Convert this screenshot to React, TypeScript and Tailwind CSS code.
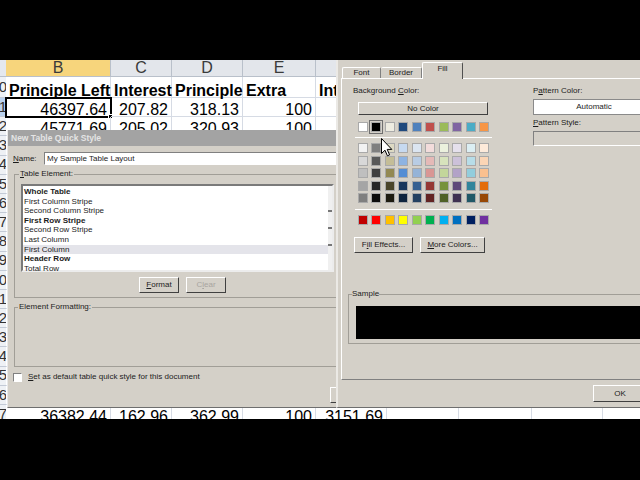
import React from "react";

const colW = ["w-[6px]", "w-[105px]", "w-[61px]", "w-[71px]", "w-[73px]", "w-[71px]", "w-[72px]", "w-[73px]", "w-[71px]", "w-[71px]"];
const letters = ["", "B", "C", "D", "E", "F", "G", "H", "I", "J"];

const rowData: Record<number, { vals: string[]; bold?: boolean }> = {
  10: { vals: ["Principle Left", "Interest", "Principle", "Extra", "Interest Paid"], bold: true },
  11: { vals: ["46397.64", "207.82", "318.13", "100", ""] },
  12: { vals: ["45771.69", "205.02", "320.93", "100", ""] },
  27: { vals: ["36382.44", "162.96", "362.99", "100", "3151.69"] },
};

const raised = "border border-t-white border-l-white border-r-[#404040] border-b-[#404040] bg-[#d4d0c8]";
const sunken = "border border-t-[#808080] border-l-[#808080] border-r-white border-b-white";

// office 2007 theme palette
const themeTop = ["bg-[#ffffff]", "bg-[#000000]", "bg-[#eeece1]", "bg-[#1f497d]", "bg-[#4f81bd]", "bg-[#c0504d]", "bg-[#9bbb59]", "bg-[#8064a2]", "bg-[#4bacc6]", "bg-[#f79646]"];
const themeShades = [
  ["bg-[#f2f2f2]", "bg-[#7f7f7f]", "bg-[#ddd9c3]", "bg-[#c6d9f0]", "bg-[#dbe5f1]", "bg-[#f2dcdb]", "bg-[#ebf1dd]", "bg-[#e5e0ec]", "bg-[#dbeef3]", "bg-[#fdeada]"],
  ["bg-[#d8d8d8]", "bg-[#595959]", "bg-[#c4bd97]", "bg-[#8db3e2]", "bg-[#b8cce4]", "bg-[#e5b9b7]", "bg-[#d7e3bc]", "bg-[#ccc1d9]", "bg-[#b7dde8]", "bg-[#fbd5b5]"],
  ["bg-[#bfbfbf]", "bg-[#3f3f3f]", "bg-[#938953]", "bg-[#548dd4]", "bg-[#95b3d7]", "bg-[#d99694]", "bg-[#c3d69b]", "bg-[#b2a2c7]", "bg-[#92cddc]", "bg-[#fac08f]"],
  ["bg-[#a5a5a5]", "bg-[#262626]", "bg-[#494429]", "bg-[#17365d]", "bg-[#366092]", "bg-[#953734]", "bg-[#76923c]", "bg-[#5f497a]", "bg-[#31859b]", "bg-[#e36c09]"],
  ["bg-[#7f7f7f]", "bg-[#0c0c0c]", "bg-[#1d1b10]", "bg-[#0f243e]", "bg-[#244061]", "bg-[#632423]", "bg-[#4f6128]", "bg-[#3f3151]", "bg-[#205867]", "bg-[#974806]"],
];
const standard = ["bg-[#c00000]", "bg-[#ff0000]", "bg-[#ffc000]", "bg-[#ffff00]", "bg-[#92d050]", "bg-[#00b050]", "bg-[#00b0f0]", "bg-[#0070c0]", "bg-[#002060]", "bg-[#7030a0]"];

const elements = [
  { t: "Whole Table", b: true },
  { t: "First Column Stripe" },
  { t: "Second Column Stripe" },
  { t: "First Row Stripe", b: true },
  { t: "Second Row Stripe" },
  { t: "Last Column" },
  { t: "First Column", sel: true },
  { t: "Header Row", b: true },
  { t: "Total Row" },
];

function SheetRow({ n }: { n: number }) {
  const row = rowData[n];
  return (
    <div className={`flex ${n === 10 ? "h-[21px]" : "h-[19.2px]"}`}>
      <div className={`${colW[0]} shrink-0 overflow-hidden flex items-center justify-end border-b border-[#c3cad6] text-[15px] text-[#333] ${n === 11 ? "bg-[#b9d1ee]" : "bg-[#eef1f5]"}`}>
        <span className="-mr-[1px]">{n}</span>
      </div>
      {letters.slice(1).map((_, i) => {
        const v = row?.vals[i] ?? "";
        const selected = n === 11 && i === 0;
        return (
          <div
            key={i}
            className={`${colW[i + 1]} shrink-0 relative flex items-end px-[3px] whitespace-nowrap text-[16px] leading-[12px] text-black border-r border-b border-[#d6dbe4] ${row?.bold ? "font-bold justify-start" : "justify-end"} ${selected ? "outline-2 outline-black -outline-offset-1" : ""}`}
          >
            {v}
            {selected && <div className="absolute -right-[3px] -bottom-[3px] w-[5px] h-[5px] bg-black border border-white" />}
          </div>
        );
      })}
    </div>
  );
}

function Sheet() {
  const rows = Array.from({ length: 18 }, (_, i) => i + 10);
  return (
    <div className="h-[359px] overflow-hidden bg-white">
      <div className="flex h-[17px]">
        <div className="w-[6px] shrink-0 bg-[#e4e8ee] border-b border-[#b9c0ca]" />
        {letters.slice(1).map((l, i) => (
          <div
            key={l}
            className={`${colW[i + 1]} shrink-0 flex items-center justify-center text-[16px] text-[#3a3a3a] border-r border-b border-[#b9c0ca] ${i === 0 ? "bg-[#f7d57c]" : "bg-[#e3e6eb]"}`}
          >
            {l}
          </div>
        ))}
      </div>
      {rows.map((n) => (
        <SheetRow key={n} n={n} />
      ))}
    </div>
  );
}

function QuickStyleDialog() {
  return (
    <div className="absolute left-[7px] top-[130px] w-[330px] h-[278px] overflow-hidden bg-[#d4d0c8] border-l border-l-[#e8e8e8] border-b border-b-[#6e6e6e] text-[8px] leading-[10px] text-[#1c1c1c]">
      <div className="h-[16px] bg-[#a3a3a3] flex items-center pl-[3px] text-[8.5px] font-bold text-[#e4e4e4]">
        New Table Quick Style
      </div>

      <div className="flex items-center mt-[6px] pl-[5px]">
        <span className="w-[31px] shrink-0">
          <u>N</u>ame:
        </span>
        <div className={`h-[13px] flex-1 bg-white ${sunken} flex items-center pl-[2px]`}>My Sample Table Layout</div>
      </div>

      <fieldset className="mt-[4px] ml-[6px] -mr-[8px] border border-[#a19e97] pb-[4px]">
        <legend className="ml-[4px] px-[1px]">
          <u>T</u>able Element:
        </legend>
        <div className="mt-[5px] ml-[6px] w-[313px] h-[88px] flex bg-white border-2 border-t-[#7a7a7a] border-l-[#7a7a7a] border-r-[#ececec] border-b-[#ececec]">
          <div className="flex-1 pt-[1px]">
            {elements.map((e) => (
              <div
                key={e.t}
                className={`h-[9.6px] leading-[9.6px] pl-[1px] ${e.b ? "font-bold" : ""} ${e.sel ? "bg-[#e4e4ea]" : ""}`}
              >
                {e.t}
              </div>
            ))}
          </div>
          <div className="w-[4px] flex flex-col justify-between py-[24px] bg-[#f0f0f0]">
            <div className="h-[2px] bg-[#777]" />
            <div className="h-[2px] bg-[#777]" />
            <div className="h-[2px] bg-[#777]" />
          </div>
        </div>
        <div className="flex gap-[7px] pl-[124px] mt-[5px]">
          <div className={`w-[40px] h-[16px] ${raised} flex items-center justify-center`}>
            <u>F</u>ormat
          </div>
          <div className={`w-[40px] h-[16px] ${raised} flex items-center justify-center text-[#a8a5a0]`}>
            C<u>l</u>ear
          </div>
        </div>
      </fieldset>

      <fieldset className="mt-[4px] ml-[6px] -mr-[8px] h-[65px] border border-[#a19e97]">
        <legend className="ml-[3px] px-[1px]">Element Formatting:</legend>
      </fieldset>

      <div className="flex items-center mt-[5px] pl-[5px]">
        <div className={`w-[9px] h-[9px] bg-white ${sunken}`} />
        <span className="ml-[6px]">
          <u>S</u>et as default table quick style for this document
        </span>
      </div>

      <div className={`mt-[5px] ml-[322px] w-[40px] h-[16px] ${raised}`} />
    </div>
  );
}

function Swatches({ colors, sel }: { colors: string[]; sel?: number }) {
  return (
    <div className="flex gap-[3.45px]">
      {colors.map((c, i) => (
        <div
          key={i}
          className={`w-[10px] h-[10px] border border-[#a9a9a9] ${c} ${i === sel ? "outline-1 outline-offset-1 outline-[#6f6f6f]" : ""}`}
        />
      ))}
    </div>
  );
}

function FormatCellsDialog() {
  return (
    <div className="absolute left-[336px] top-[60px] w-[304px] h-[348px] overflow-hidden bg-[#d4d0c8] border-l-2 border-l-[#ebe9e5] border-b border-b-[#6e6e6e] text-[8px] leading-[10px] text-[#1c1c1c]">
      <div className="flex items-end h-[18px] pl-[4px]">
        <div className="w-[39px] h-[11px] flex items-center justify-center border-t border-l border-t-white border-l-white border-r border-r-[#808080] rounded-t-[2px]">
          Font
        </div>
        <div className="w-[41px] h-[11px] flex items-center justify-center border-t border-t-white border-r border-r-[#808080] rounded-t-[2px]">
          Border
        </div>
        <div className="relative z-10 -mb-px w-[41px] h-[17px] pb-[4px] flex items-center justify-center bg-[#d4d0c8] border-t border-l border-t-white border-l-white border-r border-r-[#505050] rounded-t-[2px]">
          Fill
        </div>
      </div>

      <div className="ml-[3px] w-[330px] h-[302px] border-t border-l border-t-white border-l-white border-b border-b-[#808080]">
        <div className="flex">
          <div className="w-[191px] shrink-0 pl-[11px] pt-[7px]">
            <div>
              Background <u>C</u>olor:
            </div>
            <div className={`mt-[6px] ml-[5px] w-[130px] h-[13px] ${raised} flex items-center justify-center`}>No Color</div>
            <div className="mt-[7px] ml-[5px]">
              <Swatches colors={themeTop} sel={1} />
            </div>
            <div className="mt-[5px] ml-[2px] w-[137px] h-px bg-white" />
            <div className="mt-[5px] ml-[5px] flex flex-col gap-[2.6px]">
              {themeShades.map((r, i) => (
                <Swatches key={i} colors={r} />
              ))}
            </div>
            <div className="mt-[6px] ml-[2px] w-[137px] h-px bg-white" />
            <div className="mt-[5px] ml-[5px]">
              <Swatches colors={standard} />
            </div>
            <div className="flex gap-[7px] mt-[12px] ml-[1px]">
              <div className={`w-[59px] h-[16px] ${raised} flex items-center justify-center`}>
                F<u>i</u>ll Effects...
              </div>
              <div className={`w-[65px] h-[16px] ${raised} flex items-center justify-center`}>
                <u>M</u>ore Colors...
              </div>
            </div>
          </div>
          <div className="flex-1 pt-[7px]">
            <div>
              P<u>a</u>ttern Color:
            </div>
            <div className="mt-[3px] w-[122px] h-[16px] bg-white border border-[#8a8a8a] flex items-center justify-center">Automatic</div>
            <div className="mt-[3px]">
              <u>P</u>attern Style:
            </div>
            <div className={`mt-[3px] w-[122px] h-[15px] bg-[#d4d0c8] ${sunken}`} />
          </div>
        </div>

        <fieldset className="mt-[36px] ml-[6px] w-[320px] border border-[#a19e97] pb-[4px]">
          <legend className="ml-[3px]">Sample</legend>
          <div className="mt-[7px] ml-[7px] h-[33px] bg-black" />
        </fieldset>
      </div>

      <div className={`mt-[5px] ml-[255px] w-[54px] h-[17px] ${raised} border-r-[#202020] border-b-[#202020] flex items-center justify-center`}>
        OK
      </div>
    </div>
  );
}

function Cursor() {
  return (
    <svg className="absolute left-[381px] top-[138px]" width="12" height="19" viewBox="0 0 12 19">
      <path d="M0.5 0.5 L0.5 15.5 L4 12.2 L6.4 17.8 L8.6 16.9 L6.2 11.4 L10.8 11.4 Z" fill="#fff" stroke="#000" strokeWidth="1" strokeLinejoin="miter" />
    </svg>
  );
}

export default function App() {
  return (
    <div className="relative w-[640px] h-[480px] overflow-hidden bg-black font-['Liberation_Sans',Arial,sans-serif]">
      <div className="h-[60px]" />
      <Sheet />
      <QuickStyleDialog />
      <FormatCellsDialog />
      <Cursor />
    </div>
  );
}
